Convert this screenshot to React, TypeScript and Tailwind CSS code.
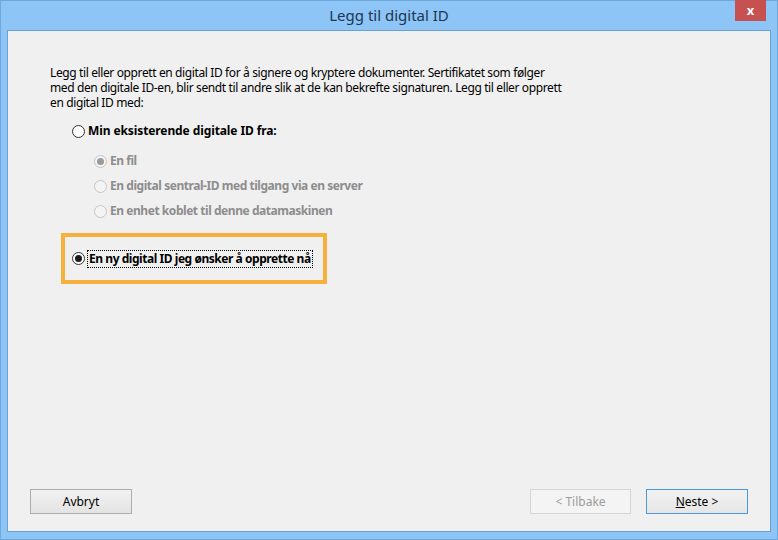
import React from "react";

const font = { fontFamily: '"Segoe UI", "Noto Sans", "Open Sans", sans-serif' };

function Radio({ checked, disabled }: { checked?: boolean; disabled?: boolean }) {
  return (
    <span
      className={
        "relative inline-flex h-[13px] w-[13px] shrink-0 items-center justify-center rounded-full border " +
        (disabled ? "border-[#c6c6c6] bg-[#f4f4f4]" : "border-[#333333] bg-white")
      }
    >
      {checked && (
        <span
          className={
            "h-[7px] w-[7px] rounded-full " + (disabled ? "bg-[#9a9a9a]" : "bg-[#1a1a1a]")
          }
        />
      )}
    </span>
  );
}

export default function App() {
  return (
    <div
      className="flex h-[540px] w-[778px] flex-col border border-[#6fa9dc] bg-[#8cc5f6] px-[6px] pb-[7px]"
      style={font}
    >
      {/* Title bar */}
      <div className="relative flex h-[29px] shrink-0 items-center justify-center">
        <span className="text-[15px] text-[#1e3553]">Legg til digital ID</span>
        <div className="absolute right-[5px] top-[-1px] flex h-[21px] w-[31px] items-center justify-center bg-[#c75050] text-[13px] font-bold leading-none text-white">
          x
        </div>
      </div>

      {/* Client area */}
      <div className="flex flex-1 flex-col border border-[#6c9fd2] bg-[#f0f0f0] pl-[42px] pr-[22px] pt-[34px] text-[12px] text-black">
        <p className="whitespace-nowrap leading-[15px] tracking-[-0.38px]">
          Legg til eller opprett en digital ID for å signere og kryptere dokumenter. Sertifikatet som følger
          <br />
          med den digitale ID-en, blir sendt til andre slik at de kan bekrefte signaturen. Legg til eller opprett
          <br />
          en digital ID med:
        </p>

        <div className="ml-[22px] mt-[13px] flex h-[16px] items-center gap-[3px]">
          <Radio />
          <span className="whitespace-nowrap font-bold tracking-[-0.1px]">Min eksisterende digitale ID fra:</span>
        </div>

        <div className="ml-[44px] mt-[14px] flex flex-col gap-[9px] whitespace-nowrap font-bold tracking-[-0.45px] text-[#8d8d8d]">
          <div className="flex h-[16px] items-center gap-[3px]">
            <Radio checked disabled />
            <span>En fil</span>
          </div>
          <div className="flex h-[16px] items-center gap-[3px]">
            <Radio disabled />
            <span>En digital sentral-ID med tilgang via en server</span>
          </div>
          <div className="flex h-[16px] items-center gap-[3px]">
            <Radio disabled />
            <span>En enhet koblet til denne datamaskinen</span>
          </div>
        </div>

        <div className="ml-[11px] mt-[14px] flex h-[51px] w-[266px] items-center border-[4px] border-[#f6b13d] pl-[7px]">
          <Radio checked />
          <span className="ml-[2px] flex h-[18px] items-center whitespace-nowrap border border-dotted border-black px-[1px] font-bold tracking-[-0.45px]">
            En ny digital ID jeg ønsker å opprette nå
          </span>
        </div>

        <div className="flex-1" />

        <div className="-ml-[20px] mb-[17px] flex items-center">
          <button className="flex h-[25px] w-[102px] items-center justify-center border border-[#adadad] bg-gradient-to-b from-[#f2f2f2] to-[#e3e3e3] text-[12px] text-black">
            Avbryt
          </button>
          <div className="flex-1" />
          <button className="flex h-[25px] w-[101px] items-center justify-center border border-[#d5d5d5] bg-[#f4f4f4] text-[12px] text-[#9c9c9c]">
            &lt; Tilbake
          </button>
          <button className="ml-[15px] flex h-[25px] w-[102px] items-center justify-center border border-[#4d97dd] bg-gradient-to-b from-[#f2f2f2] to-[#e6e6e6] text-[12px] text-black">
            <span className="underline">N</span>este &gt;
          </button>
        </div>
      </div>
    </div>
  );
}
